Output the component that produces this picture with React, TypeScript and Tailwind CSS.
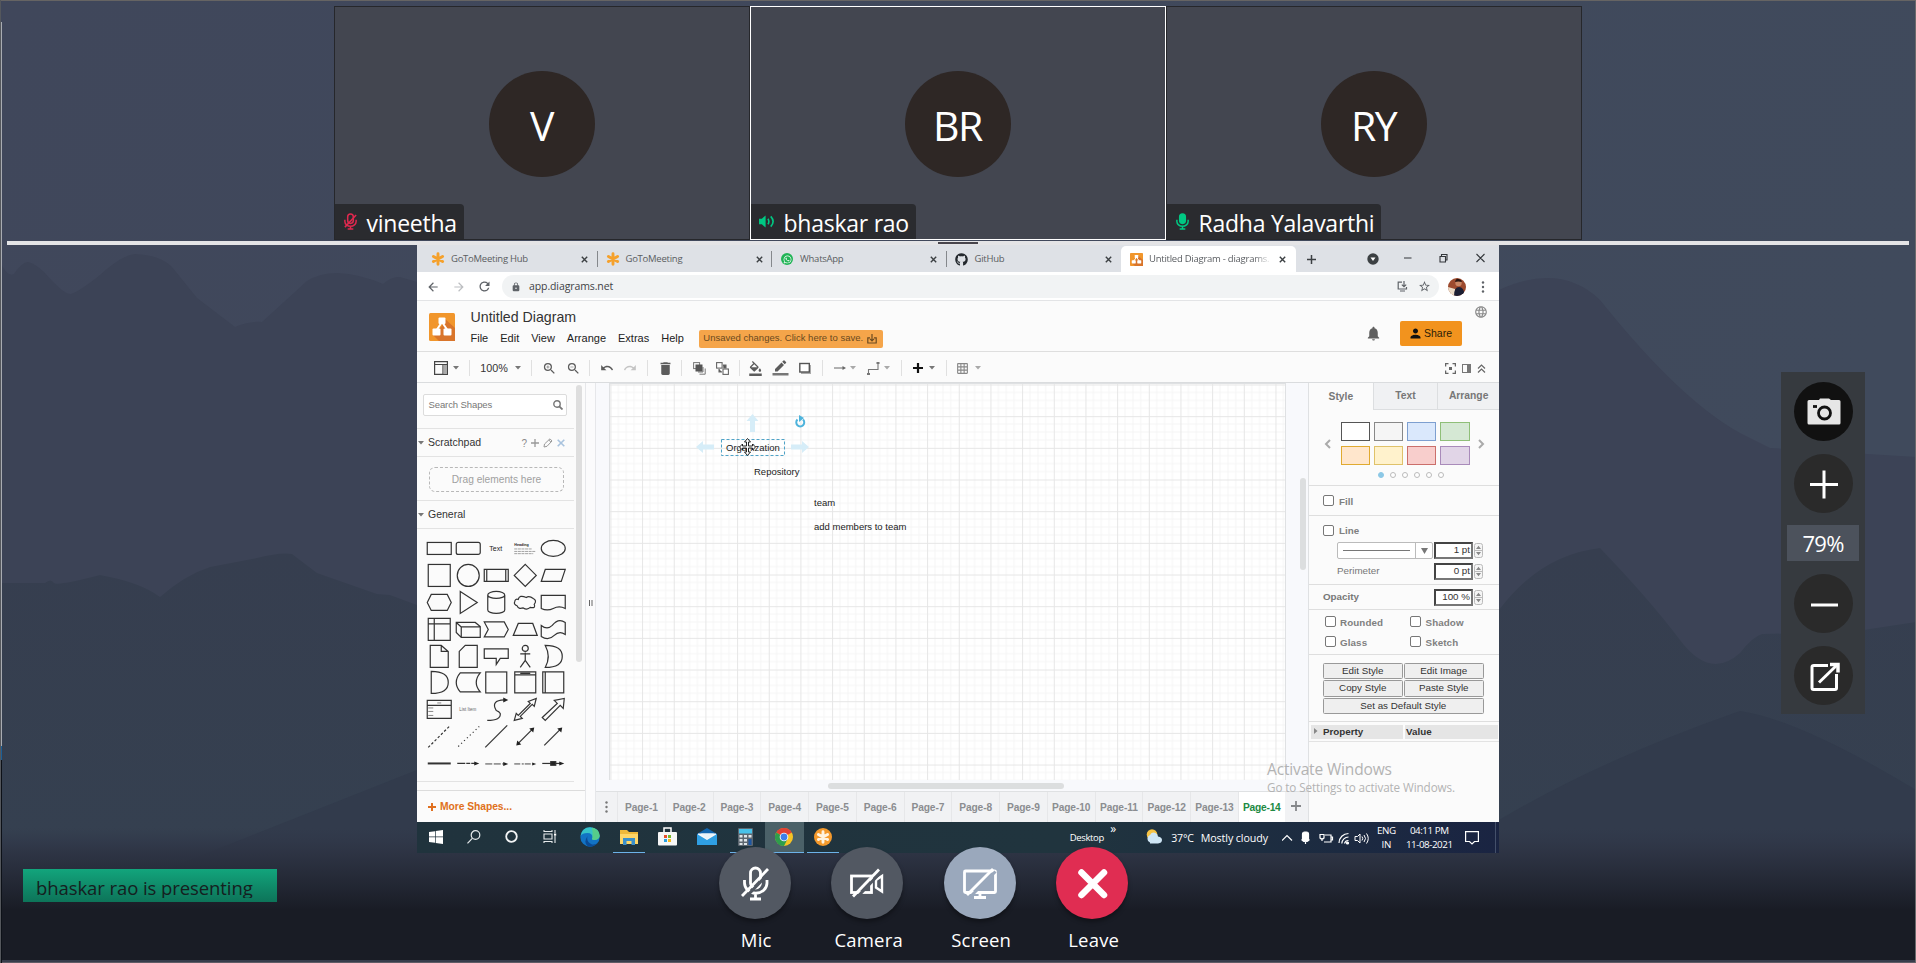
import React from "react";
import { FaGithub, FaWhatsapp } from "react-icons/fa";
import {
  MdArrowBack, MdArrowForward, MdRefresh, MdLock, MdStarBorder, MdNotifications, MdPerson,
  MdLanguage, MdZoomIn, MdZoomOut, MdUndo, MdRedo, MdDelete, MdFormatColorFill, MdBorderColor, MdGridOn,
} from "react-icons/md";

const UI = "font-['Open_Sans','Noto_Sans',sans-serif]";
const ARIAL = "font-['Liberation_Sans',Arial,sans-serif]";

/* ---------- backdrop ---------- */

function Backdrop() {
  return (
    <svg className="absolute inset-0" width="1916" height="963" viewBox="0 0 1916 963">
      <defs>
        <linearGradient id="sky" x1="0" y1="0" x2="1" y2="0.3">
          <stop offset="0" stopColor="#40475b" />
          <stop offset="1" stopColor="#404a5c" />
        </linearGradient>
        <linearGradient id="low" x1="0" y1="553" x2="0" y2="840" gradientUnits="userSpaceOnUse">
          <stop offset="0" stopColor="#363e4f" />
          <stop offset="1" stopColor="#354050" />
        </linearGradient>
        <linearGradient id="shade" x1="0" y1="828" x2="0" y2="910" gradientUnits="userSpaceOnUse">
          <stop offset="0" stopColor="#2f3648" stopOpacity="0" />
          <stop offset="0.3" stopColor="#2d3343" stopOpacity="0.9" />
          <stop offset="1" stopColor="#191c25" />
        </linearGradient>
      </defs>
      <rect width="1916" height="963" fill="url(#sky)" />
      <path
        fill="#3c4356"
        d="M0 262Q8 278 14 274Q22 262 28 262Q34 263 44 272Q64 295 71 294Q80 291 100 275Q122 255 135 254Q160 255 172 267L197 298L235 327Q248 321 262 322L307 281Q320 273 337 273Q360 274 383 284Q392 276 400 277L417 282L700 320L1000 270L1300 330L1499 290Q1560 262 1600 300Q1680 400 1740 433L1770 448L1916 457V963H0Z"
      />
      <path
        fill="url(#low)"
        d="M0 583H45Q51 578 54 583Q58 586 100 575Q140 582 160 597Q185 575 210 567L257 558Q280 552 292 554L317 573L377 594L390 595L417 605L700 660L1200 690L1499 610Q1540 555 1600 548Q1650 600 1680 640Q1710 680 1740 653Q1752 637 1762 634L1850 632L1916 622V963H0Z"
      />
      <path fill="#323b4c" d="M0 935L417 770L700 720L1499 820Q1600 760 1740 711Q1800 720 1916 790V963H0Z" />
      <rect y="828" width="1916" height="135" fill="url(#shade)" />
      <rect y="960" width="1916" height="3" fill="#383d4c" />
      <rect y="962" width="1916" height="1" fill="#5f5c66" />
      <rect width="1916" height="1" fill="#666463" />
      <rect width="1" height="963" fill="#54575c" />
      <rect x="1" y="22" width="1" height="724" fill="#a9acb2" />
      <rect x="1" y="746" width="1" height="14" fill="#1b5f97" />
      <rect x="1" y="760" width="1" height="203" fill="#0d1118" />
      <rect x="1915" width="1" height="963" fill="#6a6a6c" />
    </svg>
  );
}

/* ---------- participants ---------- */

function TileMic({ off }: { off?: boolean }) {
  const c = off ? "#e0294f" : "#00c983";
  return (
    <svg width="15" height="17" viewBox="-8 -9 16 18" fill="none" stroke={c} strokeWidth="1.6">
      <rect x="-3" y="-8" width="6" height="10" rx="3" fill={off ? "none" : c} />
      <path d="M-6-2V0A6 5 0 0 0 6 0V-2M0 5V8M-3 8H3" />
      {off && <path d="M-6 6L6-7" strokeWidth="1.6" />}
    </svg>
  );
}

function TileSpeaker() {
  return (
    <svg width="16" height="15" viewBox="0 0 17 16">
      <path d="M0 5H3L7 1.5V14.5L3 11H0Z" fill="#00c983" />
      <path d="M9.5 5Q11.5 8 9.5 11M12.5 2.5Q17.5 8 12.5 13.5" fill="none" stroke="#00c983" strokeWidth="1.7" />
    </svg>
  );
}

function Tile({ initials, name, icon, active }: { initials: string; name: string; icon: React.ReactNode; active?: boolean }) {
  return (
    <div className={"relative flex h-[234px] w-[416px] items-center justify-center border bg-[#434650] " + (active ? "border-white" : "border-[#26272b]")}>
      <div className="mt-[2px] flex size-[106px] items-center justify-center rounded-full bg-[#2e2725] pt-[4px] text-[41px] tracking-[-1.5px] text-white">
        {initials}
      </div>
      <div className="absolute bottom-0 left-0 flex h-[35px] items-center gap-[9px] rounded-tr-[4px] bg-[#2a2b2f] pr-[7px] pl-[8px] text-[23px] leading-[30px] tracking-[-0.25px] text-white">
        {icon}
        <span className="pt-[3px]">{name}</span>
      </div>
    </div>
  );
}

/* ---------- browser chrome ---------- */

function Daisy({ size, color }: { size: number; color: string }) {
  return (
    <svg width={size} height={size} viewBox="-7 -7 14 14" stroke={color} strokeWidth="2.900" strokeLinecap="round">
      <path d="M0-5.200V5.200M-4.600-2.600L4.600 2.600M-4.600 2.600L4.600-2.600" />
    </svg>
  );
}

function DrawioLogo({ w, h }: { w: number; h: number }) {
  return (
    <svg width={w} height={h} viewBox="0 0 26 28" preserveAspectRatio="none">
      <rect width="26" height="28" rx="1.5" fill="#f1962c" />
      <path d="M15 5L26 15V28H10L4 22L13 13Z" fill="#d9752b" />
      <path d="M13 9L7 18M13 9L19 18" stroke="#fff" strokeWidth="2" />
      <rect x="9.5" y="4.500" width="7" height="6.500" rx="1" fill="#fff" />
      <rect x="3.500" y="15.500" width="8" height="7" rx="1" fill="#fff" />
      <rect x="14.500" y="15.500" width="8" height="7" rx="1" fill="#fff" />
    </svg>
  );
}

function ChromeTab({ icon, title, active, last }: { icon: React.ReactNode; title: string; active?: boolean; last?: boolean }) {
  return (
    <div className={"flex h-[26px] w-[174.5px] shrink-0 items-center rounded-t-[5px] pl-[8px] " + (active ? "bg-white" : "")}>
      <div className="flex w-[14px] shrink-0 justify-center">{icon}</div>
      <div className={"ml-[6px] w-[123px] text-[9.500px] tracking-[-0.25px] whitespace-nowrap text-[#5a5d61] " + (active ? "[mask-image:linear-gradient(to_right,black_85%,transparent)]" : "")}>{title}</div>
      <svg className="ml-[7px]" width="7" height="7" viewBox="0 0 7 7" stroke="#3c4043" strokeWidth="1.400"><path d="M.8.8L6.200 6.200M6.200.8L.8 6.200" /></svg>
      {!active && !last && <div className="ml-auto h-[16px] w-px bg-[#85888c]" />}
    </div>
  );
}

function BrowserChrome() {
  return (
    <>
      <div className="flex h-[27px] items-end bg-[#dee1e6] pl-[6px] pb-0">
        <ChromeTab icon={<Daisy size={14} color="#f5a12c" />} title="GoToMeeting Hub" />
        <ChromeTab icon={<Daisy size={14} color="#f5a12c" />} title="GoToMeeting" />
        <ChromeTab icon={<span className="flex size-[12px] items-center justify-center rounded-full bg-[#1fb455]"><FaWhatsapp size={9} color="#fff" /></span>} title="WhatsApp" />
        <ChromeTab last icon={<FaGithub size={13} color="#24292e" />} title="GitHub" />
        <ChromeTab active icon={<DrawioLogo w={13} h={13} />} title="Untitled Diagram - diagrams." />
        <div className="flex h-[26px] grow items-center text-[#3c4043]">
          <svg className="ml-[11px]" width="9" height="9" viewBox="0 0 9 9" stroke="#3c4043" strokeWidth="1.500"><path d="M0 4.500H9M4.500 0V9" /></svg>
          <svg className="ml-[51px]" width="12" height="12" viewBox="0 0 12 12"><circle cx="6" cy="6" r="5.700" fill="#3c4043" /><path d="M3.500 4.500H8.500L6 8Z" fill="#fff" /></svg>
          <svg className="mb-[3px] ml-[24px]" width="82" height="10" viewBox="0 0 82 10" fill="none" stroke="#33363a" strokeWidth="1.100">
            <path d="M1 5H8.500M37 3.500H42.500V9H37ZM38.500 3.500V1.500H44V7H42.500M73.500 1L81.500 9M81.500 1L73.500 9" />
          </svg>
        </div>
      </div>
      <div className="flex h-[29px] items-center border-b border-[#e3e4e6] bg-white pt-px pl-[9px] text-[#5f6368]">
        <MdArrowBack size={14} />
        <MdArrowForward size={14} className="ml-[12px] text-[#bcbec1]" />
        <MdRefresh size={15} className="ml-[11px]" />
        <div className="ml-[10px] flex h-[23px] w-[937px] items-center rounded-full bg-[#f1f3f4] pr-[8px] pl-[9px]">
          <MdLock size={10} />
          <span className="ml-[8px] pt-px text-[10.500px] tracking-[-0.1px] text-[#3f4246]">app.diagrams.net</span>
          <svg className="mr-[10px] ml-auto" width="11" height="11" viewBox="0 0 11 11" fill="none" stroke="#5f6368" strokeWidth="1.200">
            <path d="M5 1.200H1.200V8H9.500V6M3 10H8M7 0V5.500M4.800 3.600L7 5.600L9.200 3.600" />
          </svg>
          <MdStarBorder size={13} />
        </div>
        <svg className="ml-[9px]" width="18" height="18" viewBox="0 0 18 18">
          <clipPath id="av"><circle cx="9" cy="9" r="9" /></clipPath>
          <g clipPath="url(#av)">
            <rect width="18" height="18" fill="#9c4a2e" />
            <path d="M0 9L7 11V18H0Z" fill="#ecdcc8" />
            <path d="M6 18Q6 9 11 9T17 18Z" fill="#1c1f33" />
            <circle cx="10.500" cy="5" r="3.200" fill="#c98765" />
            <path d="M7 4Q8 0 11 1T14 4Q10 3 7 4Z" fill="#2a1410" />
          </g>
        </svg>
        <svg className="ml-[15px]" width="4" height="12" viewBox="0 0 4 12" fill="#5f6368"><circle cx="2" cy="1.500" r="1.200" /><circle cx="2" cy="6" r="1.200" /><circle cx="2" cy="10.500" r="1.200" /></svg>
      </div>
    </>
  );
}

/* ---------- editor header and toolbar ---------- */

function EditorHeader() {
  return (
    <div className={"flex h-[51px] border-b border-[#dedede] bg-[#fbfbfb] " + ARIAL}>
      <div className="mt-[12px] ml-[12px]"><DrawioLogo w={26} h={28} /></div>
      <div className="ml-[15.500px] flex flex-col">
        <div className="mt-[7.500px] h-[16px] text-[14.200px] leading-[16px] text-[#333]">Untitled Diagram</div>
        <div className="mt-[4px] flex h-[20px] items-center text-[11px] text-[#222]">
          <span className="mr-[12px]">File</span>
          <span className="mr-[12px]">Edit</span>
          <span className="mr-[12px]">View</span>
          <span className="mr-[12px]">Arrange</span>
          <span className="mr-[12px]">Extras</span>
          <span className="mr-[15px]">Help</span>
          <div className="flex h-[18px] w-[184px] items-center rounded-[2px] bg-[#f5a54a] pl-[4.500px] text-[9.500px] tracking-[0.010px] whitespace-nowrap text-[#6b4a20]">
            <span className="w-[159px]">Unsaved changes. Click here to save.</span>
            <svg className="ml-[5px]" width="10" height="10" viewBox="0 0 10 10" fill="none" stroke="#6b4a20" strokeWidth="1.200"><path d="M3 3.800H.8V9H9.200V3.800H7M5 0V6.500M3 4.800L5 6.800L7 4.800" /></svg>
          </div>
        </div>
      </div>
      <div className="ml-auto flex">
        <MdNotifications size={17} className="mt-[24px] text-[#5f5f5f]" />
        <div className="mt-[20px] ml-[18px] flex h-[25px] w-[62px] items-center rounded-[2px] bg-[#f2931e] pl-[8px] text-[10.500px] text-[#2b1c08]">
          <MdPerson size={15} color="#111" />
          <span className="ml-[1.500px]">Share</span>
        </div>
        <MdLanguage size={14} className="mt-[4px] mr-[11px] ml-[12.500px] text-[#8a8a8a]" />
      </div>
    </div>
  );
}

const Caret = ({ light }: { light?: boolean }) => (
  <svg className="shrink-0" width="6" height="4" viewBox="0 0 6 4"><path d="M0 0H6L3 3.600Z" fill={light ? "#a9a9a9" : "#777"} /></svg>
);

const Group = ({ w, children }: { w: string; children: React.ReactNode }) => (
  <div className={"flex h-[16px] shrink-0 items-center justify-evenly border-r border-[#e0e0e0] " + w}>{children}</div>
);

function Toolbar() {
  return (
    <div className={"flex h-[31px] items-center border-b border-[#dadcde] bg-[#fbfbfb] pt-[2px] text-[#5c5c5c] " + ARIAL}>
      <Group w="w-[53px] pl-[7px]">
        <div className="flex items-center gap-[5px]">
          <svg width="14" height="14" viewBox="0 0 14 14" fill="none" stroke="#444" strokeWidth="1.200"><path d="M.6.600H13.400V13.400H.6ZM.6 3.500H13.400M9 3.500V13.400" /><rect x="9.500" y="4" width="3.500" height="9" fill="#aaa" stroke="none" /></svg>
          <Caret />
        </div>
      </Group>
      <Group w="w-[62px]">
        <div className="flex items-center gap-[7px] text-[10.800px] text-[#333]">100%<Caret /></div>
      </Group>
      <Group w="w-[58px] pl-[2px]"><MdZoomIn size={15} /><MdZoomOut size={15} /></Group>
      <Group w="w-[58px]"><MdUndo size={14} /><MdRedo size={14} className="text-[#c4c4c4]" /></Group>
      <Group w="w-[34px] pl-[1.500px]"><MdDelete size={17} /></Group>
      <Group w="w-[58px] pl-[1.500px]">
        <svg width="13" height="13" viewBox="0 0 13 13" fill="none" stroke="#777" strokeWidth="1"><rect x=".6" y=".6" width="6" height="6" /><path d="M10 5V10H5M12.200 6.500V12.200H6.500" /><rect x="2.500" y="2.500" width="7" height="7" fill="#555" stroke="none" /></svg>
        <svg width="13" height="13" viewBox="0 0 13 13" fill="none" stroke="#666" strokeWidth="1.100"><rect x=".6" y=".6" width="5.500" height="5.500" fill="#fff" /><rect x="7" y="7" width="5.400" height="5.400" fill="#fff" /><path d="M7 3H10V6H7.500M3 7V10H6" fill="#555" /></svg>
      </Group>
      <Group w="w-[82.500px]">
        <MdFormatColorFill size={15} />
        <svg width="17" height="16" viewBox="0 0 17 16"><path d="M3 11.500V9L9.500 2.500L12 5L5.500 11.500ZM10.200 1.800L11.500.5Q12 0 12.500.5L14 2Q14.500 2.500 14 3L12.700 4.300Z" fill="#5c5c5c" /><rect x=".5" y="13" width="16" height="2.500" fill="#777" /></svg>
        <svg width="16" height="14" viewBox="0 0 16 14" fill="none"><rect x="4" y="4" width="10" height="9" fill="#aaa" /><rect x="2.800" y="2.500" width="9.500" height="8.500" stroke="#555" strokeWidth="1.400" fill="#fff" /></svg>
      </Group>
      <Group w="w-[79.500px]">
        <div className="flex items-center gap-[4px]">
          <svg width="12" height="8" viewBox="0 0 12 8"><path d="M0 4H9" stroke="#666" /><path d="M8.500 2L12 4L8.500 6Z" fill="#666" /></svg><Caret light />
        </div>
        <div className="flex items-center gap-[4px]">
          <svg width="13" height="13" viewBox="0 0 13 13" fill="none" stroke="#777" strokeWidth="1.100"><path d="M1.500 12V7.500H11V1" /><path d="M0 12H3M9.500 1H12.500" strokeWidth="1.800" /></svg><Caret light />
        </div>
      </Group>
      <Group w="w-[45px]">
        <div className="flex items-center gap-[6px]">
          <svg width="10" height="10" viewBox="0 0 10 10" stroke="#111" strokeWidth="2.200"><path d="M0 5H10M5 0V10" /></svg><Caret />
        </div>
      </Group>
      <div className="ml-[9px] flex items-center gap-[6px]"><MdGridOn size={13} className="text-[#888]" /><Caret light /></div>
      <div className="mr-[13px] ml-auto flex items-center gap-[6px]">
        <svg width="11" height="11" viewBox="0 0 11 11" fill="none" stroke="#666" strokeWidth="1.300"><path d="M.6 3.500V.6H3.500M7.500.6H10.400V3.500M10.400 7.500V10.400H7.500M3.500 10.400H.6V7.500" /><rect x="4" y="4" width="3" height="3" fill="#666" stroke="none" /></svg>
        <svg width="9" height="9" viewBox="0 0 9 9" fill="none" stroke="#777"><rect x=".5" y=".5" width="8" height="8" /><rect x="5" y="1" width="3" height="7" fill="#777" stroke="none" /></svg>
        <svg width="9" height="9" viewBox="0 0 9 9" fill="none" stroke="#666" strokeWidth="1.200"><path d="M1 4.500L4.500 1L8 4.500M1 8.500L4.500 5L8 8.500" /></svg>
      </div>
    </div>
  );
}

/* ---------- shape palette ---------- */

const fillK = { fill: "#222", stroke: "none" } as const;

const SHAPES: React.ReactNode[] = [
  <rect x="-12" y="-6" width="24" height="12" />,
  <rect x="-12" y="-6" width="24" height="12" rx="2" />,
  <text x="-.5" y="2.500" fontSize="7" textAnchor="middle" {...fillK}>Text</text>,
  <g><text x="-11" y="-2" fontSize="3.700" fontWeight="bold" {...fillK}>Heading</text><path d="M-11 .5H7M-11 3H10M-11 5.200H8" stroke="#999" strokeWidth=".9" strokeDasharray="3 .6" /></g>,
  <ellipse rx="12" ry="8" />,
  <rect x="-11" y="-11" width="22" height="22" />,
  <circle r="11" />,
  <path d="M-12-6H12V6H-12ZM-9.500-6V6M9.500-6V6" />,
  <path d="M0-11L11 0L0 11L-11 0Z" />,
  <path d="M-8-6H12L8 6H-12Z" />,
  <path d="M-8-8H8L12 0L8 8H-8L-12 0Z" />,
  <path d="M-8-11L9 0L-8 11Z" />,
  <path d="M-8.500-7.500A8.500 3.500 0 0 1 8.500-7.500V7.500A8.500 3.500 0 0 1-8.500 7.500ZM-8.500-7.500A8.500 3.500 0 0 0 8.500-7.500" />,
  <path d="M-7-3Q-10-4-10.500-1Q-12 2-8 3.500Q-7 7-2 5.500Q2 8 5 5Q11 6 9 2Q12-2 8-4Q4-7 1-5Q-6-8-7-3Z" />,
  <path d="M-12-7H12V6Q6 3 0 6Q-6 9-12 6Z" />,
  <path d="M-11-11H11V11H-11ZM-5-11V11M-11-5.500H11" />,
  <path d="M-12-7H7L12-3V8H-7L-12 3ZM-7 8V-2.500H12M-7-2.500L-12-7" />,
  <path d="M-12-7.500H8L12 0L8 7.500H-12L-8 0Z" />,
  <path d="M-7-6H7.500L12 6H-12Z" />,
  <path d="M-12-4Q-6 1-1-4Q5-12 12-7V5Q6 1 1 6Q-5 12-12 7Z" />,
  <path d="M-9-11H2L9-5V11H-9ZM2-11V-5H9" />,
  <path d="M-3-11H9V11H-9V-5Z" />,
  <path d="M-12-7.500H12V2H4L0 8V2H-12Z" />,
  <path d="M0-4V4M-5-2.500H5M0 4L-5 11M0 4L5 11M-3-8A3 3 0 1 0 3-8A3 3 0 1 0-3-8" />,
  <path d="M-8-11Q9-11 9 0Q9 11-8 11Q-2 0-8-11Z" />,
  <path d="M-8-11Q9-11 9 0Q9 11-8 11Z" />,
  <path d="M-8-9.500H12Q4 0 12 9.500H-8Q-16 0-8-9.500Z" />,
  <rect x="-10.500" y="-10.500" width="21" height="21" />,
  <path d="M-10.500-10.500H10.500V10.500H-10.500ZM-10.500-7.500H10.500M-5-9H5" />,
  <path d="M-10.500-10.500H10.500V10.500H-10.500ZM-8-10.500V10.500" />,
  <g><path d="M-12-9H12V9H-12ZM-12-4H12" /><path d="M-2-6.500H2M-11-1.500H-6M-11 2H-6M-11 6H-6" stroke="#888" strokeWidth="1" /></g>,
  <text x="-.5" y="1.500" fontSize="4.500" textAnchor="middle" fill="#666" stroke="none">List Item</text>,
  <g><path d="M-9 11Q5 11 4 4Q3 2 0 1Q-6-9 8-9.500" /><path d="M7-12L12-9.500L7-7Z" fill="#222" stroke="none" /></g>,
  <path d="M-11 11L-9 4L-7 6L5-6L3-8L11-11L9-3L7-5L-5 7L-3 9Z" />,
  <path d="M-11 8L4-6L1-9L11-11L10-1L7-4L-8 11Z" />,
  <path d="M-11 11L11-11" strokeDasharray="2.500 2" />,
  <path d="M-10 10L11-10" strokeDasharray="1.200 2.800" />,
  <path d="M-11 11L11-11" />,
  <g><path d="M-7 7L7-7" /><path d="M-9 9L-8 4L-4 8ZM9-9L8-4L4-8Z" fill="#222" stroke="none" /></g>,
  <g><path d="M-9 9L7-7" /><path d="M9-9L8-4L4-8Z" fill="#222" stroke="none" /></g>,
  <path d="M-11.500 0H11.500" strokeWidth="2" />,
  <g><path d="M-11 0H7" strokeDasharray="8 1 4 1" /><path d="M6-2L11 0L6 2Z" fill="#222" stroke="none" /></g>,
  <g><path d="M-11 .5H8" strokeDasharray="7 1.500" strokeWidth=".9" /><path d="M7-1.500L12 .5L7 2.500Z" fill="#222" stroke="none" /></g>,
  <g><path d="M-11 .5H8" strokeDasharray="6 1.500 2 1" strokeWidth=".9" /><path d="M7-1L11 .5L7 2Z" fill="#222" stroke="none" /></g>,
  <g><path d="M-11 0H7" /><rect x="-2.500" y="-1.800" width="5" height="3.600" fill="#222" /><path d="M6-2L11 0L6 2Z" fill="#222" stroke="none" /></g>,
];

function SectionTitle({ title, children }: { title: string; children?: React.ReactNode }) {
  return (
    <div className="flex h-[28px] w-[157px] items-center border-b border-[#e3e3e3] pt-px pl-[1px]">
      <Caret />
      <span className="ml-[4px] text-[10.500px] text-[#333]">{title}</span>
      {children}
    </div>
  );
}

function Sidebar() {
  return (
    <div className={"flex h-[439px] w-[168px] flex-col bg-[#fbfbfb] " + ARIAL}>
      <div className="flex h-[408px] border-b border-[#dcdcdc]">
        <div className="w-[159px]">
          <div className="flex h-[46px] w-[157px] items-start border-b border-[#e3e3e3] pt-[11px] pl-[6px]">
            <div className="flex h-[22px] w-[144px] items-center rounded-[2px] border border-[#dcdcdc] bg-white pl-[4.500px] text-[9.500px] tracking-[-0.1px] text-[#777]">
              Search Shapes
              <svg className="mr-[3px] ml-auto" width="10" height="10" viewBox="0 0 10 10" fill="none" stroke="#777" strokeWidth="1.400"><circle cx="4" cy="4" r="3.200" /><path d="M6.300 6.300L9.500 9.500" strokeWidth="1.800" /></svg>
            </div>
          </div>
          <SectionTitle title="Scratchpad">
            <div className="ml-auto flex items-center gap-[4px] pr-[9px] text-[10px] text-[#8a8a8a]">
              <span>?</span>
              <svg width="8" height="8" viewBox="0 0 8 8" stroke="#999" strokeWidth="1.300"><path d="M0 4H8M4 0V8" /></svg>
              <svg width="10" height="10" viewBox="0 0 10 10" fill="none" stroke="#999"><path d="M1 9L1.500 6L7 .8L9 3L4 8.300ZM5.800 2L8 4.200" /></svg>
              <svg width="8" height="8" viewBox="0 0 8 8" stroke="#a9c3de" strokeWidth="1.600"><path d="M.7.7L7.300 7.300M7.300.7L.7 7.300" /></svg>
            </div>
          </SectionTitle>
          <div className="h-[44px] w-[157px] border-b border-[#e3e3e3] pt-[10px] pl-[12px]">
            <div className="flex h-[25px] w-[135px] items-center justify-center rounded-[6px] border-[1.500px] border-dashed border-[#b8b8b8] pt-px text-[10.200px] text-[#a0a0a0]">Drag elements here</div>
          </div>
          <SectionTitle title="General" />
          <div className="grid h-[253px] w-[157px] grid-cols-[repeat(5,28.500px)] grid-rows-[repeat(9,26.900px)] border-b border-[#e3e3e3] pt-[6px] pl-[8px]">
            {SHAPES.map((s, i) => (
              <svg key={i} width="28.500" height="26.900" viewBox="-14.250 -13.450 28.500 26.900" fill="none" stroke="#333" strokeWidth="1.200">{s}</svg>
            ))}
          </div>
        </div>
        <div className="mt-[2px] h-[277px] w-[6px] rounded-full bg-[#dedede]" />
      </div>
      <div className="flex grow items-center pl-[11px] text-[10.300px] font-bold tracking-[-0.05px] text-[#e07020]">
        <svg width="8" height="8" viewBox="0 0 8 8" stroke="#e07020" strokeWidth="2"><path d="M0 4H8M4 0V8" /></svg>
        <span className="ml-[4px]">More Shapes...</span>
      </div>
    </div>
  );
}

/* ---------- canvas ---------- */

function Canvas() {
  const pages = Array.from({ length: 13 }, (_, i) => `Page-${i + 1}`);
  return (
    <div className={"flex h-[439px] w-[712px] flex-col bg-[#f8f9fc] " + ARIAL}>
      <div className="flex h-[408px]">
        <div className="ml-[13px] flex w-[690px] flex-col">
          <div className="relative h-[397px] w-[677px] overflow-hidden border-t border-r border-l border-[#dfe1e3] bg-white text-[9.500px] leading-[11px] text-[#222]">
            <svg className="absolute inset-0" width="677" height="397">
              <defs>
                <pattern id="grid" x="0.400" y="0.500" width="31.670" height="31.670" patternUnits="userSpaceOnUse">
                  <path d="M7.900 0V31.670M15.800 0V31.670M23.700 0V31.670M0 7.900H31.670M0 15.800H31.670M0 23.700H31.670" stroke="#f5f5f5" fill="none" />
                  <path d="M.5 0V31.670M0 .5H31.670" stroke="#e6e6e6" fill="none" />
                </pattern>
              </defs>
              <rect width="677" height="397" fill="url(#grid)" />
              <g fill="#d6edf8">
                <path d="M142.500 30L148.500 37H145V48H140V37H136.500Z" />
                <path d="M86 63L93 57V60.500H104V65.500H93V69Z" />
                <path d="M199 63L192 57V60.500H181V65.500H192V69Z" />
              </g>
              <rect x="111.500" y="55.500" width="63" height="16" fill="none" stroke="#4fa3c7" strokeDasharray="3 2" />
              <path d="M187.500 35.500A4 4 0 1 0 193 35.500" fill="none" stroke="#4db3dc" strokeWidth="2" />
              <path d="M189 31V38L194 34Z" fill="#4db3dc" />
            </svg>
            <div className="absolute top-[58px] left-[116px]">Organization</div>
            <div className="absolute top-[81.500px] left-[144px]">Repository</div>
            <div className="absolute top-[113px] left-[204px]">team</div>
            <div className="absolute top-[137px] left-[204px]">add members to team</div>
            <svg className="absolute top-[54px] left-[129px]" width="17" height="18" viewBox="-8.500 -9 17 18" fill="#fff" stroke="#222">
              <path d="M0-8.500L3-5H1V-1H5V-3L8 0L5 3V1H1V5H3L0 8.500L-3 5H-1V1H-5V3L-8 0L-5-3V-1H-1V-5H-3Z" />
            </svg>
          </div>
          <div className="mt-[3px] ml-[219px] h-[6px] w-[236px] rounded-full bg-[#dcdedf]" />
        </div>
        <div className="mt-[95px] ml-[1px] h-[92px] w-[6px] rounded-full bg-[#dcdedf]" />
      </div>
      <div className="flex h-[31px] border-t border-[#dfe1e3] bg-[#f1f2f4] text-[10.200px] font-bold text-[#8b8d90]">
        <div className="flex w-[22px] items-center justify-center border-r border-[#e6e7e9]">
          <svg width="3" height="12" viewBox="0 0 3 12" fill="#777"><circle cx="1.500" cy="1.500" r="1.200" /><circle cx="1.500" cy="6" r="1.200" /><circle cx="1.500" cy="10.500" r="1.200" /></svg>
        </div>
        {pages.map((p) => (
          <div key={p} className="flex w-[47.750px] items-center justify-center border-r border-[#e6e7e9] pt-px tracking-[-0.1px]">{p}</div>
        ))}
        <div className="flex w-[46px] items-center justify-center bg-white pt-px tracking-[-0.2px] text-[#218a43]">Page-14</div>
        <div className="flex grow items-center justify-center pr-px pb-[3px]">
          <svg width="10" height="10" viewBox="0 0 10 10" stroke="#85878a" strokeWidth="1.800"><path d="M0 5H10M5 0V10" /></svg>
        </div>
      </div>
    </div>
  );
}

/* ---------- format panel ---------- */

const Check = () => <div className="mb-px size-[11px] shrink-0 rounded-[2px] border border-[#777] bg-white" />;

const NumField = ({ v }: { v: string }) => (
  <div className="flex h-[17px] items-center">
    <div className="flex h-[17px] w-[39px] items-center justify-end border-[2px] border-t-[#444] border-r-[#777] border-b-[#777] border-l-[#444] bg-white pr-[1px] text-[9.800px] text-[#333]">{v}</div>
    <svg className="ml-[1px]" width="9" height="15" viewBox="0 0 9 15"><rect x=".5" y=".5" width="8" height="14" rx="2" fill="#f5f5f5" stroke="#bbb" /><path d="M.5 7.500H8.500" stroke="#bbb" /><path d="M2 6L4.500 2.800L7 6ZM2 9L4.500 12.200L7 9Z" fill="#888" /></svg>
  </div>
);

const Btn = ({ w, t }: { w: string; t: string }) => (
  <div className={"flex h-[16.500px] items-center justify-center rounded-[1.500px] border border-[#999] bg-[#efefef] pt-px text-[9.800px] text-[#333] " + w}>{t}</div>
);

const SWATCHES = [
  "bg-white border-[#555]", "bg-[#f5f5f5] border-[#888]", "bg-[#dae8fc] border-[#7d9fd0]", "bg-[#d5e8d4] border-[#8fbf78]",
  "bg-[#ffe6cc] border-[#e0aa30]", "bg-[#fff2cc] border-[#dfc26a]", "bg-[#f8cecc] border-[#cb6f6b]", "bg-[#e1d5e7] border-[#a98bba]",
];

function FormatPanel() {
  return (
    <div className={"flex h-[439px] w-[191px] flex-col border-l border-[#dfe1e3] bg-[#fbfbfb] text-[9.800px] text-[#707070] " + ARIAL}>
      <div className="flex h-[27px] text-[10.300px] font-bold text-[#777]">
        <div className="flex w-[64px] items-center justify-center pt-px">Style</div>
        <div className="flex w-[65px] items-center justify-center border-b border-l border-[#dcdee0] bg-[#f0f1f3]">Text</div>
        <div className="flex w-[62px] items-center justify-center border-b border-l border-[#dcdee0] bg-[#f0f1f3]">Arrange</div>
      </div>
      <div className="flex h-[76px] flex-col border-b border-[#dedede] pt-[12px]">
        <div className="flex items-center pl-[15px]">
          <svg width="7" height="10" viewBox="0 0 7 10" fill="none" stroke="#aaa" strokeWidth="2"><path d="M6 1L2 5L6 9" /></svg>
          <div className="ml-[9.500px] grid w-[129px] grid-cols-4 gap-x-[4.300px] gap-y-[5px]">
            {SWATCHES.map((s) => <div key={s} className={"h-[19px] border-[1.500px] " + s} />)}
          </div>
          <svg className="ml-[8px]" width="7" height="10" viewBox="0 0 7 10" fill="none" stroke="#aaa" strokeWidth="2"><path d="M1 1L5 5L1 9" /></svg>
        </div>
        <div className="mt-[7px] flex gap-[6px] pl-[68.500px]">
          {[0, 1, 2, 3, 4, 5].map((i) => <div key={i} className={"size-[6px] rounded-full border " + (i === 0 ? "border-[#8cc8e6] bg-[#8cc8e6]" : "border-[#bbb] bg-white")} />)}
        </div>
      </div>
      <div className="flex h-[30px] items-center gap-[5px] border-b border-[#dedede] pt-px pl-[14px] font-bold text-[#808080]"><Check /><span className="pt-[2px]">Fill</span></div>
      <div className="flex h-[69px] flex-col border-b border-[#dedede] pl-[14px] pt-[8px]">
        <div className="flex h-[14px] items-center gap-[5px] font-bold text-[#808080]"><Check /><span className="pt-px">Line</span></div>
        <div className="mt-[4px] flex pl-[14px]">
          <div className="mr-[1px] flex h-[17px] w-[96px] items-center rounded-[2px] border border-[#bbb] bg-white pl-[5px]">
            <div className="h-px w-[67px] bg-[#777]" />
            <div className="ml-[5px] flex h-full grow items-center justify-center border-l border-[#bbb]">
              <svg width="7" height="6" viewBox="0 0 7 6"><path d="M0 0H7L3.500 6Z" fill="#777" /></svg>
            </div>
          </div>
          <NumField v="1 pt" />
        </div>
        <div className="mt-[4px] flex items-center pl-[14px] text-[#777]"><span className="w-[97px]">Perimeter</span><NumField v="0 pt" /></div>
      </div>
      <div className="flex h-[25px] items-center border-b border-[#dedede] pt-px pl-[14px]"><span className="w-[111px] font-bold text-[#777]">Opacity</span><NumField v="100 %" /></div>
      <div className="grid h-[44.500px] grid-cols-[85.500px_1fr] content-center gap-y-[8px] border-b border-[#dedede] pt-px pl-[15.500px] font-bold tracking-[0.1px] text-[#808080]">
        {["Rounded", "Shadow", "Glass", "Sketch"].map((t) => (
          <div key={t} className="flex h-[12px] items-center gap-[4.500px]"><Check /><span className="pt-[2px]">{t}</span></div>
        ))}
      </div>
      <div className="flex h-[67.500px] w-full flex-wrap content-start gap-x-[1.500px] gap-y-[1px] border-b border-[#dedede] pt-[8px] pl-[14px]">
        <Btn w="w-[79.500px]" t="Edit Style" /><Btn w="w-[79.500px]" t="Edit Image" />
        <Btn w="w-[79.500px]" t="Copy Style" /><Btn w="w-[79.500px]" t="Paste Style" />
        <Btn w="w-[160.500px]" t="Set as Default Style" />
      </div>
      <div className="flex h-[20px] gap-[2px] border-b border-[#e3e3e3] pt-[3px] pb-[2px] pl-[2px] pr-px font-bold text-[#333]">
        <div className="flex w-[92px] items-center bg-[#e5e5e5] pl-[3px]"><svg className="mb-[3px] mr-[5px]" width="4" height="6" viewBox="0 0 4 6"><path d="M0 0V6L3.500 3Z" fill="#888" /></svg>Property</div>
        <div className="flex grow items-center bg-[#e5e5e5] pl-[1px]">Value</div>
      </div>
    </div>
  );
}

/* ---------- windows taskbar ---------- */

const Task = ({ children, on, active, w = "w-[38.900px]" }: { children: React.ReactNode; on?: boolean; active?: boolean; w?: string }) => (
  <div className={"flex h-[31px] shrink-0 flex-col items-center " + w + (active ? " bg-[#4b6168]" : "")}>
    <div className="flex h-[29.500px] items-center justify-center">{children}</div>
    {on && <div className={"h-[1.500px] bg-[#6cb2e8] " + (active ? "w-full" : "w-[32px]")} />}
  </div>
);

function Taskbar() {
  return (
    <div className={"flex h-[31px] bg-linear-to-r from-[#20333d] via-[#20343e] via-60% to-[#1a2442] text-white " + UI}>
      <Task w="w-[37.500px]"><svg width="14" height="14" viewBox="0 0 14 14" fill="#fff"><path d="M0 2L6 1.200V6.600H0ZM6.700 1.100L14 0V6.600H6.700ZM0 7.300H6V12.700L0 12ZM6.700 7.300H14V14L6.700 12.900Z" /></svg></Task>
      <Task w="w-[38px]"><svg width="14" height="14" viewBox="0 0 14 14" fill="none" stroke="#e6eaec" strokeWidth="1.200"><circle cx="8.500" cy="5" r="4.300" /><path d="M5.300 8.300L.5 13.300" /></svg></Task>
      <Task w="w-[38px]"><svg width="13" height="13" viewBox="0 0 13 13" fill="none" stroke="#f2f4f5" strokeWidth="1.800"><circle cx="6.500" cy="6.500" r="5.300" /></svg></Task>
      <Task w="w-[38px]"><svg width="14" height="13" viewBox="0 0 14 13" fill="none" stroke="#e6eaec" strokeWidth="1.100"><path d="M1 0V1.500H9V0M1 13V11.500H9V13M1 4H9V9H1ZM12 0V3M12 6V13" /><rect x="11" y="3.500" width="2.200" height="2.200" fill="#fff" stroke="none" /></svg></Task>
      <Task w="ml-[2px] w-[38.900px]">
        <svg width="20" height="20" viewBox="0 0 20 20">
          <circle cx="10" cy="10" r="9.700" fill="#1273c4" />
          <path d="M.5 9Q2 .5 10 .3Q19.500 1 19.700 9Q19 13 14 13Q11 12.500 12.500 10.500Q12.500 6 7.500 6Q2 6 .5 9Z" fill="#36c3c9" />
          <path d="M12 .6Q19.500 2.500 19.700 9Q19 13 14 13Q11 12.500 12.500 10.500Q13 7 12 .6Z" fill="#5fd07a" opacity=".8" />
          <path d="M7.500 9Q6 15 12 17.500Q16 18 18 15.500Q14 20.500 8 19.500Q3 16 7.500 9Z" fill="#0b4a94" />
        </svg>
      </Task>
      <Task on><svg width="18" height="16" viewBox="0 0 18 16"><path d="M0 1H7L9 3H18V15H0Z" fill="#f0b93a" /><path d="M0 5H18V15H0Z" fill="#ffd667" /><path d="M3 9H15V16H11.500V12H6.500V16H3Z" fill="#3b8fc9" /></svg></Task>
      <Task><svg width="19" height="19" viewBox="0 0 19 19"><path d="M6 6V1H13V6" fill="none" stroke="#fff" strokeWidth="1.500" /><rect y="5" width="19" height="13.500" rx="1" fill="#f7f7f7" /><path d="M6 8H9V11H6Z" fill="#e8502c" /><path d="M10 8H13V11H10Z" fill="#76b72a" /><path d="M6 12H9V15H6Z" fill="#29a0e0" /><path d="M10 12H13V15H10Z" fill="#f8b91c" /></svg></Task>
      <Task><svg width="20" height="17" viewBox="0 0 20 17"><path d="M0 6L10 0L20 6V17H0Z" fill="#1266b0" /><path d="M1 5.500H19V12H1Z" fill="#f4f8fb" /><path d="M0 6L10 12L20 6V17H0Z" fill="#2f9fe3" /><path d="M4 5.500H17L10 11.500Z" fill="#e8f3fa" /></svg></Task>
      <Task on><svg width="15" height="18" viewBox="0 0 15 18"><rect width="15" height="18" rx="1" fill="#5d6770" /><rect x="1" y="1" width="13" height="4.500" fill="#49c2ea" /><path d="M1.500 7H4.500V9.500H1.500ZM6 7H9V9.500H6ZM10.500 7H13.500V9.500H10.500ZM1.500 11H4.500V13.500H1.500ZM6 11H9V13.500H6ZM1.500 15H4.500V17H1.500ZM6 15H9V17H6Z" fill="#dfe5e9" /><rect x="10.500" y="11" width="3" height="6" fill="#1d57a3" /></svg></Task>
      <Task on active>
        <svg width="18" height="18" viewBox="-9 -9 18 18"><circle r="9" fill="#f6c324" /><path d="M0 0L-7.800-4.500A9 9 0 0 1 7.800-4.500Z" fill="#e14134" /><path d="M-7.800-4.500A9 9 0 0 0 0 9L3.500 2Z" fill="#2e9e4c" /><circle r="4.300" fill="#fff" /><circle r="3.400" fill="#3f7fe8" /></svg>
      </Task>
      <Task on><span className="flex size-[18px] items-center justify-center rounded-full bg-[#f59a2c]"><Daisy size={14} color="#fff3df" /></span></Task>
      <div className="relative mt-[10px] ml-[227px] w-[43px] text-[9.500px] leading-[12px] tracking-[-0.35px] whitespace-nowrap">Desktop<span className="absolute top-[-9px] right-[-3px] text-[12px]">»</span></div>
      <svg className="mt-[7px] ml-[32.500px]" width="18" height="16" viewBox="0 0 18 16"><circle cx="7" cy="5.500" r="5.300" fill="#f6c345" /><path d="M5 13.500A4 4 0 0 1 5 6Q7 2.500 10.500 4Q13 5 13 7.500Q17 8 17 11T13 14.500H5Z" fill="#cfe6f5" /></svg>
      <div className="mt-[9px] ml-[8px] text-[10.600px] leading-[15px] tracking-[-0.2px] whitespace-nowrap">37°C</div>
      <div className="mt-[9px] ml-[7px] w-[69px] text-[10.700px] leading-[15px] tracking-[-0.1px] whitespace-nowrap">Mostly cloudy</div>
      <svg className="mt-[9px] ml-[12px] shrink-0" width="88" height="15" viewBox="0 0 88 15" fill="none" stroke="#fff" strokeWidth="1.200">
        <path d="M0 9.500L5 4.500L10 9.500" />
        <rect x="20.500" y="1" width="6" height="9" rx="2" fill="#fff" /><path d="M19.500 8.500Q23.500 13 27.500 8.500M23.500 11V13" />
        <path d="M38 3.500V7Q40 9 42 7V3.500ZM40 8V10M43 4H49V11H42M49 6H50.500V9H49" />
        <path d="M57 12A9.500 9.500 0 0 1 66.500 2.500M59.800 12.500A6.800 6.800 0 0 1 66.500 6M62.500 12.500A4 4 0 0 1 66.500 9.500" /><circle cx="65.500" cy="12" r="1" fill="#fff" />
        <path d="M73 5.500H75.500L78 3V12L75.500 9.500H73ZM80 5.500Q81.500 7.500 80 9.500M82 4Q85 7.500 82 11M84.500 2.500Q88 7.500 84.500 12.500" strokeWidth="1" />
      </svg>
      <div className="ml-[5.500px] flex w-[22px] shrink-0 flex-col items-center pt-[2px] text-[9.800px] leading-[14px] tracking-[-0.4px]"><span>ENG</span><span>IN</span></div>
      <div className="ml-[8px] flex w-[48px] shrink-0 flex-col items-center pt-[2px] text-[9.800px] leading-[14px] tracking-[-0.45px] whitespace-nowrap"><span>04:11 PM</span><span>11-08-2021</span></div>
      <svg className="mt-[9px] ml-[12px] shrink-0" width="14" height="14" viewBox="0 0 14 14" fill="none" stroke="#fff" strokeWidth="1.200"><path d="M.6.600H13.400V10.500H9.500L7 13L4.500 10.500H.6Z" /></svg>
      <div className="ml-auto mr-[3px] h-[31px] w-px bg-[#44506a]" />
    </div>
  );
}

function SharedScreen() {
  return (
    <div className="relative flex h-[608px] w-[1082px] shrink-0 flex-col bg-[#fbfbfb]">
      <BrowserChrome />
      <EditorHeader />
      <Toolbar />
      <div className="flex h-[439px]">
        <Sidebar />
        <div className="flex w-[11px] items-center justify-center border-x border-[#e6e7ea] bg-[#fbfbfc]">
          <svg width="4" height="6" viewBox="0 0 4 6" stroke="#666"><path d="M.5 0V6M3 0V6" /></svg>
        </div>
        <Canvas />
        <FormatPanel />
      </div>
      <Taskbar />
      <div className="absolute top-[514px] left-[850px] text-[#b3b3b3]">
        <div className="text-[15.500px] leading-[20px] tracking-[-0.15px] whitespace-nowrap">Activate Windows</div>
        <div className="text-[11.700px] leading-[16px] tracking-[-0.1px] whitespace-nowrap">Go to Settings to activate Windows.</div>
      </div>
    </div>
  );
}

/* ---------- meeting controls ---------- */

function ControlButton({ label, bg, children }: { label: string; bg: string; children: React.ReactNode }) {
  return (
    <div className="flex w-[72px] flex-col items-center">
      <div className={"flex size-[72px] items-center justify-center rounded-full shadow-[0_3px_4px_rgba(0,0,0,0.35)] " + bg}>
        <svg width="48" height="48" viewBox="-24 -24 48 48" fill="none" stroke="#fff" strokeWidth="2.800">{children}</svg>
      </div>
      <span className="mt-[7px] ml-[3px] text-[18.500px] leading-[28px] tracking-[0.200px] text-white">{label}</span>
    </div>
  );
}

function Controls() {
  return (
    <div className="absolute top-[847px] left-[718.700px] flex gap-[40.500px]">
      <ControlButton label="Mic" bg="bg-[#525862]">
        <rect x="-4.500" y="-15" width="10" height="20" rx="5" />
        <path d="M-10.500-3V0A11 10 0 0 0 12 0V-3M-5 16H6M.5 10V16" />
        <path d="M-10.500 15.500L15.500-11.500" stroke="#525862" strokeWidth="3" />
        <path d="M-13 13L13-14" />
      </ControlButton>
      <ControlButton label="Camera" bg="bg-[#525862]">
        <rect x="-15.500" y="-7" width="20" height="16.500" />
        <path d="M15-7V8.500L9 4.500V-3Z" strokeWidth="2.400" />
        <path d="M-11.500 16L14-11" stroke="#525862" strokeWidth="3" />
        <path d="M-14 13.500L12-13.500" />
      </ControlButton>
      <ControlButton label="Screen" bg="bg-[#9aa8bc]">
        <rect x="-15.500" y="-12" width="31" height="21.500" rx="1" />
        <path d="M-6 14.500H6M0 10V15" />
        <path d="M-10.500 14.500L15.500-11.500" stroke="#9aa8bc" strokeWidth="3" />
        <path d="M-13 12L13-14" />
      </ControlButton>
      <ControlButton label="Leave" bg="bg-[#e02d52]">
        <path d="M-10.500-10.500L12 12M12-10.500L-10.500 12" strokeWidth="6.500" strokeLinecap="round" />
      </ControlButton>
    </div>
  );
}

const Round = ({ bg, children }: { bg: string; children: React.ReactNode }) => (
  <div className={"flex size-[59px] items-center justify-center rounded-full " + bg}>
    <svg width="36" height="36" viewBox="-18 -18 36 36" fill="none" stroke="#fff" strokeWidth="3">{children}</svg>
  </div>
);

function ZoomPanel() {
  return (
    <div className="absolute top-[372px] left-[1781px] flex h-[342px] w-[84px] flex-col items-center bg-[#363a3f] pt-[10px]">
      <Round bg="bg-[#111]">
        <path d="M-14-12H-4L-3-13.500H6L8-12H16Q17.500-12 17.500-10.500V11Q17.500 12.500 16 12.500H-14Q-15.500 12.500-15.500 11V-10.500Q-15.500-12-14-12Z" fill="#e6e6e6" stroke="none" />
        <circle cx="1.500" cy="1" r="6" stroke="#111" strokeWidth="2.800" />
        <path d="M-10-5.500H-6" stroke="#111" strokeWidth="2.800" />
      </Round>
      <div className="mt-[13px]"><Round bg="bg-[#2a2a2a]"><path d="M-13 .5H15M1-13.500V14.500" /></Round></div>
      <div className="mt-[12px] flex h-[36px] w-[72px] items-center justify-center bg-[#4c525c] text-[22px] tracking-[-0.7px] text-white">79%</div>
      <div className="mt-[13px]"><Round bg="bg-[#2a2a2a]"><path d="M-12 1H15" /></Round></div>
      <div className="mt-[13px]">
        <Round bg="bg-[#2a2a2a]">
          <path d="M5-10.500H-9Q-11-10.500-11-9V12Q-11 13.500-9.500 13.500H12Q13.500 13.500 13.500 12V-2" />
          <path d="M-4 6.500L14-11" />
          <path d="M7-11.500H15V-3.500" strokeWidth="3.500" />
        </Round>
      </div>
    </div>
  );
}

export default function App() {
  return (
    <div className={"relative h-[963px] w-[1916px] overflow-hidden bg-[#3c4356] " + UI}>
      <Backdrop />
      <div className="relative flex flex-col items-center">
        <div className="mt-[6px] mr-px flex">
          <Tile initials="V" name="vineetha" icon={<TileMic off />} />
          <Tile initials="BR" name="bhaskar rao" icon={<TileSpeaker />} active />
          <Tile initials="RY" name="Radha Yalavarthi" icon={<TileMic />} />
        </div>
        <div className="mt-px flex h-[4px] w-[1902px] items-center justify-center bg-[#e4e4e6]">
          <div className="h-[2px] w-[40px] bg-[#48454c]" />
        </div>
        <SharedScreen />
      </div>
      <ZoomPanel />
      <Controls />
      <div className="absolute top-[869px] left-[23px] flex h-[33px] w-[254px] bg-linear-to-b from-[#12a57c] to-[#0d7459] pl-[13px] text-[18.500px] tracking-[-0.08px] whitespace-nowrap text-[#15201f]">
        <span className="h-[29px] overflow-hidden leading-[37px]">bhaskar rao is presenting</span>
      </div>
    </div>
  );
}
